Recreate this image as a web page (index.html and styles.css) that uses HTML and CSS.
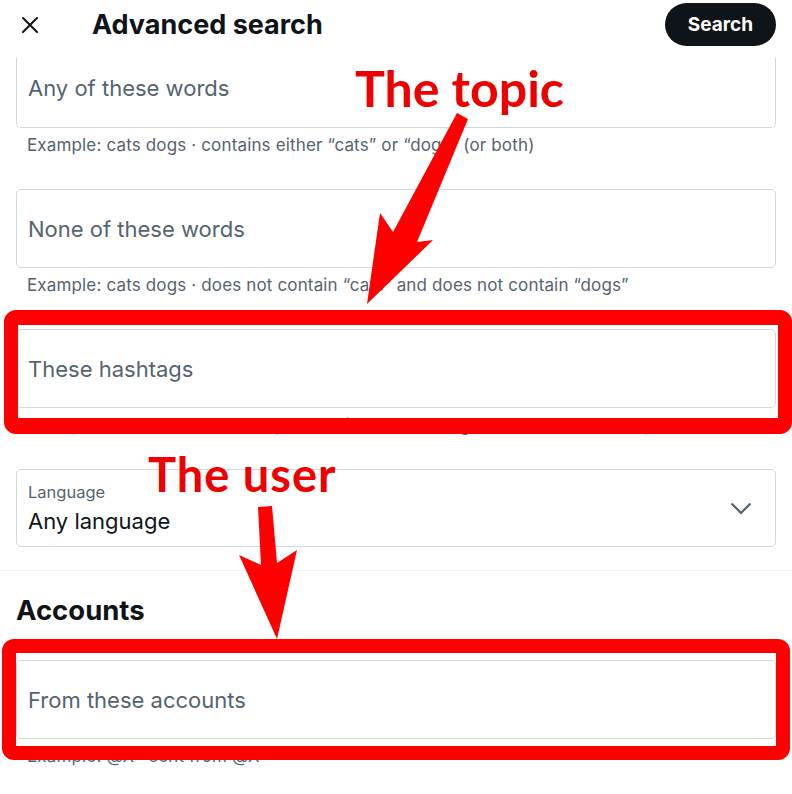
FILE: index.html
```html
<!DOCTYPE html>
<html lang="en">
<head>
<meta charset="utf-8">
<title>Advanced search</title>
<link rel="stylesheet" href="styles.css">
</head>
<body>
<div class="page">
  <header class="topbar">
    <svg class="close" viewBox="0 0 16 16" width="16" height="16" aria-hidden="true">
      <path d="M1 1 L15 15 M15 1 L1 15" stroke="#0f1419" stroke-width="2" stroke-linecap="round"/>
    </svg>
    <h1 class="title">Advanced search</h1>
    <button class="search-btn">Search</button>
  </header>

  <main class="form">
    <div class="group">
      <div class="field cut"><span class="ph">Any of these words</span></div>
      <p class="hint">Example: cats dogs · contains either “cats” or “dogs” (or both)</p>
    </div>
    <div class="group">
      <div class="field"><span class="ph">None of these words</span></div>
      <p class="hint">Example: cats dogs · does not contain “cats” and does not contain “dogs”</p>
    </div>
    <div class="group">
      <div class="field"><span class="ph">These hashtags</span></div>
      <p class="hint">Example: #ThrowbackThursday · contains the hashtag #ThrowbackThursday</p>
    </div>
    <div class="group">
      <div class="field select">
        <div class="sel-text">
          <span class="sel-label">Language</span>
          <span class="sel-value">Any language</span>
        </div>
        <svg class="chev" viewBox="0 0 22 13" width="22" height="13" aria-hidden="true">
          <path d="M1.5 1.5 L11 11 L20.5 1.5" fill="none" stroke="#536471" stroke-width="2.2"/>
        </svg>
      </div>
    </div>
  </main>

  <div class="divider"></div>

  <section class="form accounts">
    <h2 class="section-title">Accounts</h2>
    <div class="group">
      <div class="field"><span class="ph">From these accounts</span></div>
      <p class="hint">Example: @X · sent from @X</p>
    </div>
  </section>

  <div class="mark mark-one"></div>
  <div class="mark mark-two"></div>

  <svg class="annot" viewBox="0 0 792 794" width="792" height="794" aria-hidden="false">
    <text class="annot-text" x="355" y="107" font-size="50">The topic</text>
    <text class="annot-text user" x="148" y="492" font-size="47">The user</text>
    <polygon points="457,113 468,119 417,242 433,240 367,304 380,213 393,232" fill="#ff0000"/>
    <polygon points="258,507 272,506 277,563 297,550 277,639 239,555 261,565" fill="#ff0000"/>
  </svg>
</div>
</body>
</html>
```

FILE: styles.css
```css
* { box-sizing: border-box; }

html, body {
  margin: 0;
  padding: 0;
  background: #ffffff;
}

body {
  font-family: Inter, "Noto Sans", "Liberation Sans", sans-serif;
  color: #0f1419;
}

.page {
  position: relative;
  width: 792px;
  height: 794px;
  overflow: hidden;
  background: #ffffff;
}

.topbar {
  display: flex;
  align-items: center;
  height: 58px;
  padding: 0 16px 9px 22px;
}

.close {
  flex: none;
  display: block;
}

.title {
  margin: 0 0 0 54px;
  font-size: 27px;
  font-weight: 700;
  flex: 1;
}

.search-btn {
  flex: none;
  width: 111px;
  height: 43px;
  border: 0;
  border-radius: 22px;
  background: #0f1419;
  color: #ffffff;
  font-family: Inter, "Noto Sans", sans-serif;
  font-size: 19px;
  font-weight: 700;
  padding: 0;
}

.form {
  padding: 0 16px;
}

.group {
  margin-bottom: 34px;
}

.field {
  display: flex;
  align-items: center;
  height: 79px;
  border: 1px solid #cfd9de;
  border-radius: 5px;
  padding: 0 11px;
}

.field.cut {
  height: 70px;
  border-top: 0;
  border-radius: 0 0 5px 5px;
  padding-bottom: 9px;
}

.ph {
  font-size: 22px;
  color: #536471;
}

.hint {
  margin: 7px 0 0;
  padding-left: 11px;
  font-size: 17px;
  line-height: 20px;
  letter-spacing: 0.15px;
  color: #536471;
  white-space: nowrap;
}

.select {
  height: 78px;
  justify-content: space-between;
  padding-right: 23px;
}

.sel-text {
  display: flex;
  flex-direction: column;
}

.sel-label {
  font-size: 16.5px;
  line-height: 26px;
  color: #536471;
}

.sel-value {
  font-size: 22px;
  line-height: 32px;
  color: #0f1419;
}

.chev {
  display: block;
}

.divider {
  height: 1px;
  background: #eff3f4;
  margin-top: -11px;
}

.accounts {
  padding-top: 24px;
}

.section-title {
  margin: 0 0 35px 0;
  font-size: 27.5px;
  line-height: 30px;
  font-weight: 700;
}

.mark {
  position: absolute;
  border: 14px solid #ff0000;
  border-radius: 12px;
}

.mark-one {
  left: 4px;
  top: 310px;
  width: 788px;
  height: 124px;
  border-width: 15px 14px 16px 14px;
}

.mark-two {
  left: 2px;
  top: 639px;
  width: 788px;
  height: 121px;
}

.annot {
  position: absolute;
  left: 0;
  top: 0;
  pointer-events: none;
}

.annot-text {
  font-family: Lato, "Open Sans", sans-serif;
  font-weight: 700;
  fill: #ee0000;
}

.annot-text.user {
  letter-spacing: 1px;
}
```
